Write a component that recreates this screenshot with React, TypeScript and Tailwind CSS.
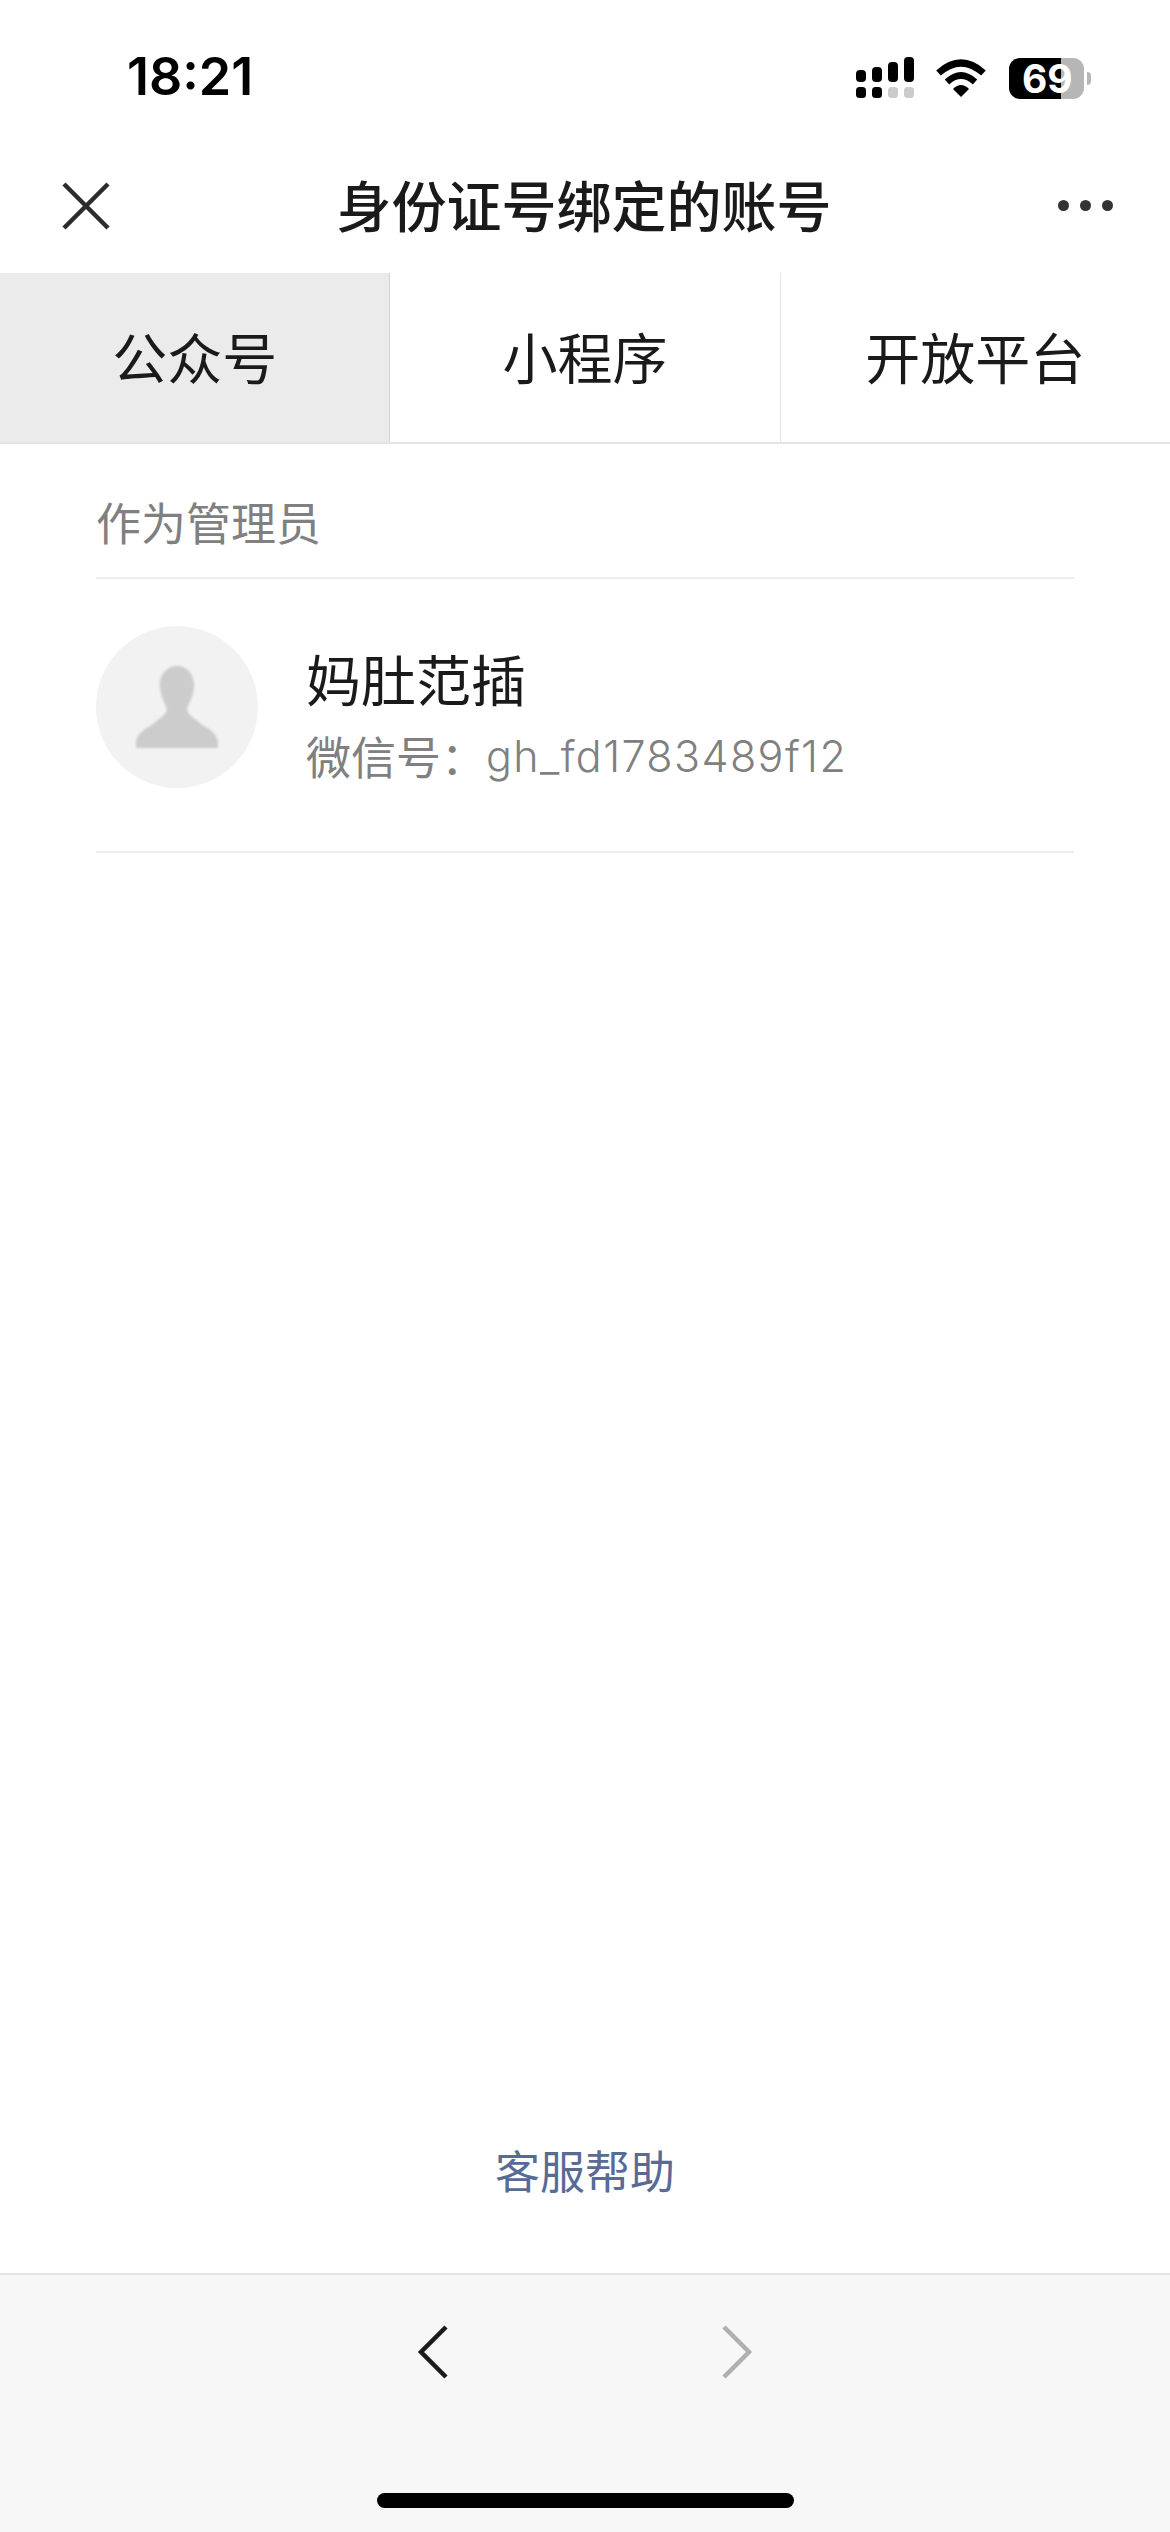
const cjk = { fontFamily: '"Noto Sans CJK SC", Inter, sans-serif' };

function StatusIcons() {
  const bars = [
    { h: 12, y: 13 },
    { h: 15, y: 10 },
    { h: 20, y: 5 },
    { h: 25, y: 0 },
  ];
  return (
    <div className="flex items-center">
      <svg width="60" height="42" viewBox="0 0 60 42" className="block">
        {bars.map((b, i) => (
          <rect key={i} x={i * 16} y={b.y} width="10" height={b.h} rx="4" fill="#000" />
        ))}
        {[0, 1, 2, 3].map((i) => (
          <rect key={i} x={i * 16} y="30" width="10" height="11" rx="3.5" fill={i < 2 ? "#000" : "#cbcbcb"} />
        ))}
      </svg>
      <svg width="52" height="38" viewBox="0 0 52 38" className="ml-[19px] block">
        <path d="M3.5 14 Q26 -6 48.5 14" fill="none" stroke="#000" strokeWidth="7" />
        <path d="M12 23 Q26 10 40 23" fill="none" stroke="#000" strokeWidth="6.5" />
        <path d="M18 30 Q26 22 34 30 L26 38 Z" fill="#000" />
      </svg>
      <div className="relative ml-[22px] flex h-[41px] w-[75px]">
        <div className="h-full w-[52px] rounded-l-[11px] bg-black" />
        <div className="h-full flex-1 rounded-r-[11px] bg-[#b6b6b6]" />
        <span
          className="absolute left-[13px] top-0 text-[39px] leading-[41px] font-bold text-white"
          style={{ fontFamily: "Inter, sans-serif" }}
        >
          69
        </span>
      </div>
      <div className="ml-[3px] h-[13px] w-[4px] rounded-r-full bg-[#b6b6b6]" />
    </div>
  );
}

function Tab({ label, active, border }: { label: string; active?: boolean; border?: string }) {
  return (
    <div
      className={`flex flex-1 items-center justify-center pb-[5px] text-[55px] text-[#1a1a1a] ${active ? "bg-[#ebebeb]" : ""} ${border ?? ""}`}
    >
      {label}
    </div>
  );
}

export default function App() {
  return (
    <div className="flex h-[2532px] w-[1170px] flex-col overflow-hidden bg-white" style={cjk}>
      <div className="flex h-[150px] shrink-0 items-start justify-between pl-[127px] pr-[79px] pt-[49px]">
        <span className="text-[52px] leading-[56px] font-semibold text-black" style={{ fontFamily: "Inter, sans-serif" }}>
          18:21
        </span>
        <div className="pt-[8px]">
          <StatusIcons />
        </div>
      </div>

      <div className="flex h-[123px] shrink-0 items-center justify-between pb-[12px] pl-[62px] pr-[57px]">
        <svg width="48" height="48" viewBox="0 0 48 48" className="block">
          <path d="M2 2 L46 46 M46 2 L2 46" stroke="#2c2c2c" strokeWidth="4.5" fill="none" />
        </svg>
        <h1 className="pb-[6px] text-[55px] leading-[70px] font-medium text-[#1a1a1a]">身份证号绑定的账号</h1>
        <div className="flex gap-[11px]">
          <span className="h-[11px] w-[11px] rounded-full bg-[#333]" />
          <span className="h-[11px] w-[11px] rounded-full bg-[#333]" />
          <span className="h-[11px] w-[11px] rounded-full bg-[#333]" />
        </div>
      </div>

      <div className="flex h-[171px] shrink-0 border-b-2 border-[#e4e4e4]">
        <Tab label="公众号" active border="border-r border-[#d2d2d2]" />
        <Tab label="小程序" border="border-r border-[#e6e6e6]" />
        <Tab label="开放平台" />
      </div>

      <div className="mx-[96px] flex-1">
        <div className="flex h-[135px] items-center border-b-2 border-[#ececec] pt-[23px] text-[45px] text-[#808080]">作为管理员</div>
        <div className="flex h-[274px] items-center border-b-2 border-[#ececec] pb-[16px]">
          <div className="flex h-[162px] w-[162px] items-center justify-center rounded-full bg-[#f2f2f2]">
            <svg width="84" height="84" viewBox="0 0 84 84" className="block blur-[1px]">
              <path
                d="M42 1 C53 1 60 11 59 22 C58 33 54 38 52 44 C53 50 58 52 66 59 C74 64 83 69 83 78 L83 83 L1 83 L1 78 C1 69 10 64 18 59 C26 52 31 50 32 44 C30 38 26 33 25 22 C24 11 31 1 42 1 Z"
                fill="#cccccc"
              />
            </svg>
          </div>
          <div className="ml-[48px] flex flex-col pt-[14px]">
            <div className="text-[55px] leading-[70px] text-[#1a1a1a]">妈肚范插</div>
            <div className="mt-[14px] flex items-center text-[45px] leading-[60px] text-[#808080]">
              <span>微信号：</span>
              <span className="text-[43px] font-light tracking-[1.4px]" style={{ fontFamily: "Inter, sans-serif" }}>
                gh_fd1783489f12
              </span>
            </div>
          </div>
        </div>
      </div>

      <div className="flex h-[175px] shrink-0 items-start justify-center pt-[42px] text-[45px] leading-[60px] text-[#576b95]">
        客服帮助
      </div>

      <div className="relative flex h-[259px] shrink-0 justify-center gap-[272px] border-t-2 border-[#e6e6e6] bg-[#f7f7f7] pt-[50px]">
        <svg width="32" height="54" viewBox="0 0 32 54" className="block">
          <path d="M29 2 L4 27 L29 52" stroke="#1a1a1a" strokeWidth="4.5" fill="none" />
        </svg>
        <svg width="32" height="54" viewBox="0 0 32 54" className="block">
          <path d="M3 2 L28 27 L3 52" stroke="#b0b0b0" strokeWidth="4.5" fill="none" />
        </svg>
        <div className="absolute bottom-[24px] left-[377px] h-[15px] w-[417px] rounded-full bg-black" />
      </div>
    </div>
  );
}
